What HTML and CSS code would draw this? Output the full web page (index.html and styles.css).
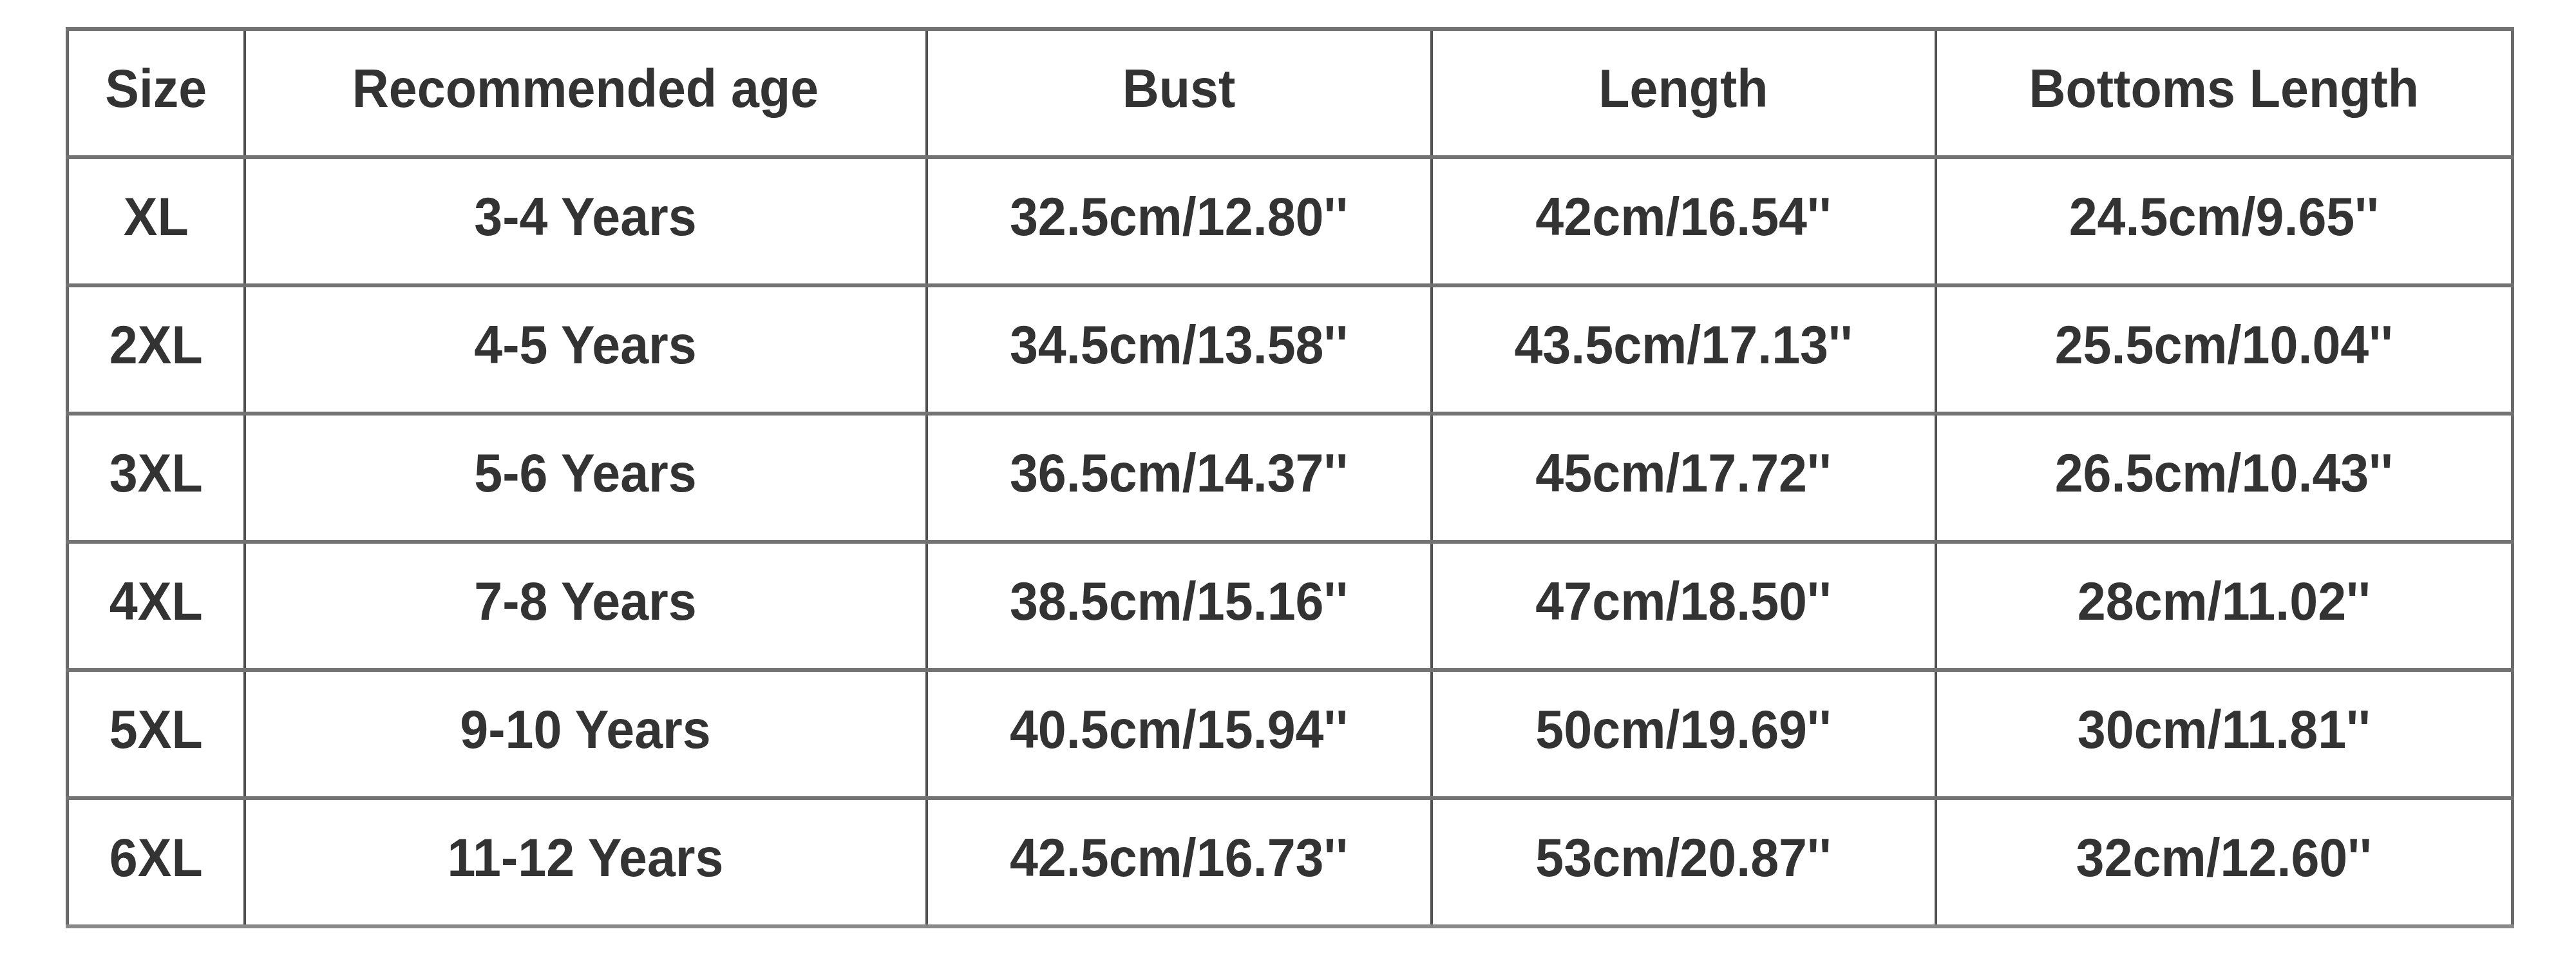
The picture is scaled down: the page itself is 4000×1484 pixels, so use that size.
FILE: index.html
```html
<!DOCTYPE html>
<html lang="en">
<head>
<meta charset="utf-8">
<title>Size Chart</title>
<link rel="stylesheet" href="styles.css">
</head>
<body>
<main class="page">
  <table class="size-chart">
    <colgroup>
      <col class="c-size">
      <col class="c-age">
      <col class="c-bust">
      <col class="c-length">
      <col class="c-bottoms">
    </colgroup>
    <thead>
      <tr>
        <th><span>Size</span></th>
        <th><span>Recommended age</span></th>
        <th><span>Bust</span></th>
        <th><span>Length</span></th>
        <th><span>Bottoms Length</span></th>
      </tr>
    </thead>
    <tbody>
      <tr><td><span>XL</span></td><td><span>3-4 Years</span></td><td><span>32.5cm/12.80''</span></td><td><span>42cm/16.54''</span></td><td><span>24.5cm/9.65''</span></td></tr>
      <tr><td><span>2XL</span></td><td><span>4-5 Years</span></td><td><span>34.5cm/13.58''</span></td><td><span>43.5cm/17.13''</span></td><td><span>25.5cm/10.04''</span></td></tr>
      <tr><td><span>3XL</span></td><td><span>5-6 Years</span></td><td><span>36.5cm/14.37''</span></td><td><span>45cm/17.72''</span></td><td><span>26.5cm/10.43''</span></td></tr>
      <tr><td><span>4XL</span></td><td><span>7-8 Years</span></td><td><span>38.5cm/15.16''</span></td><td><span>47cm/18.50''</span></td><td><span>28cm/11.02''</span></td></tr>
      <tr><td><span>5XL</span></td><td><span>9-10 Years</span></td><td><span>40.5cm/15.94''</span></td><td><span>50cm/19.69''</span></td><td><span>30cm/11.81''</span></td></tr>
      <tr><td><span>6XL</span></td><td><span>11-12 Years</span></td><td><span>42.5cm/16.73''</span></td><td><span>53cm/20.87''</span></td><td><span>32cm/12.60''</span></td></tr>
    </tbody>
  </table>
</main>
</body>
</html>
```
FILE: styles.css
```css
html, body {
  margin: 0;
  padding: 0;
  background: #ffffff;
}

.page {
  padding: 42px 0 0 102px;
  font-family: "Liberation Sans", Arial, sans-serif;
  color: #333333;
}

.size-chart {
  border-collapse: collapse;
  table-layout: fixed;
  width: 3797px;
}

.c-size { width: 275px; }
.c-age { width: 1059px; }
.c-bust { width: 784px; }
.c-length { width: 783px; }
.c-bottoms { width: 896px; }

.size-chart tr {
  height: 199px;
}

.size-chart th,
.size-chart td {
  padding: 0 0 14px 0;
  text-align: center;
  vertical-align: middle;
  font-size: 79px;
  font-weight: bold;
  line-height: 1;
  white-space: nowrap;
  border-top: 6px solid #737373;
  border-bottom: 6px solid #737373;
  border-left: 4px solid #505050;
  border-right: 4px solid #505050;
}

.size-chart th:first-child,
.size-chart td:first-child {
  border-left: 5px solid #6a6a6a;
}

.size-chart th:last-child,
.size-chart td:last-child {
  border-right: 5px solid #6a6a6a;
}

.size-chart tbody tr:last-child td {
  border-bottom: 6px solid #8a8a8a;
}

.size-chart span {
  display: inline-block;
  transform: scaleY(1.05);
}
```
